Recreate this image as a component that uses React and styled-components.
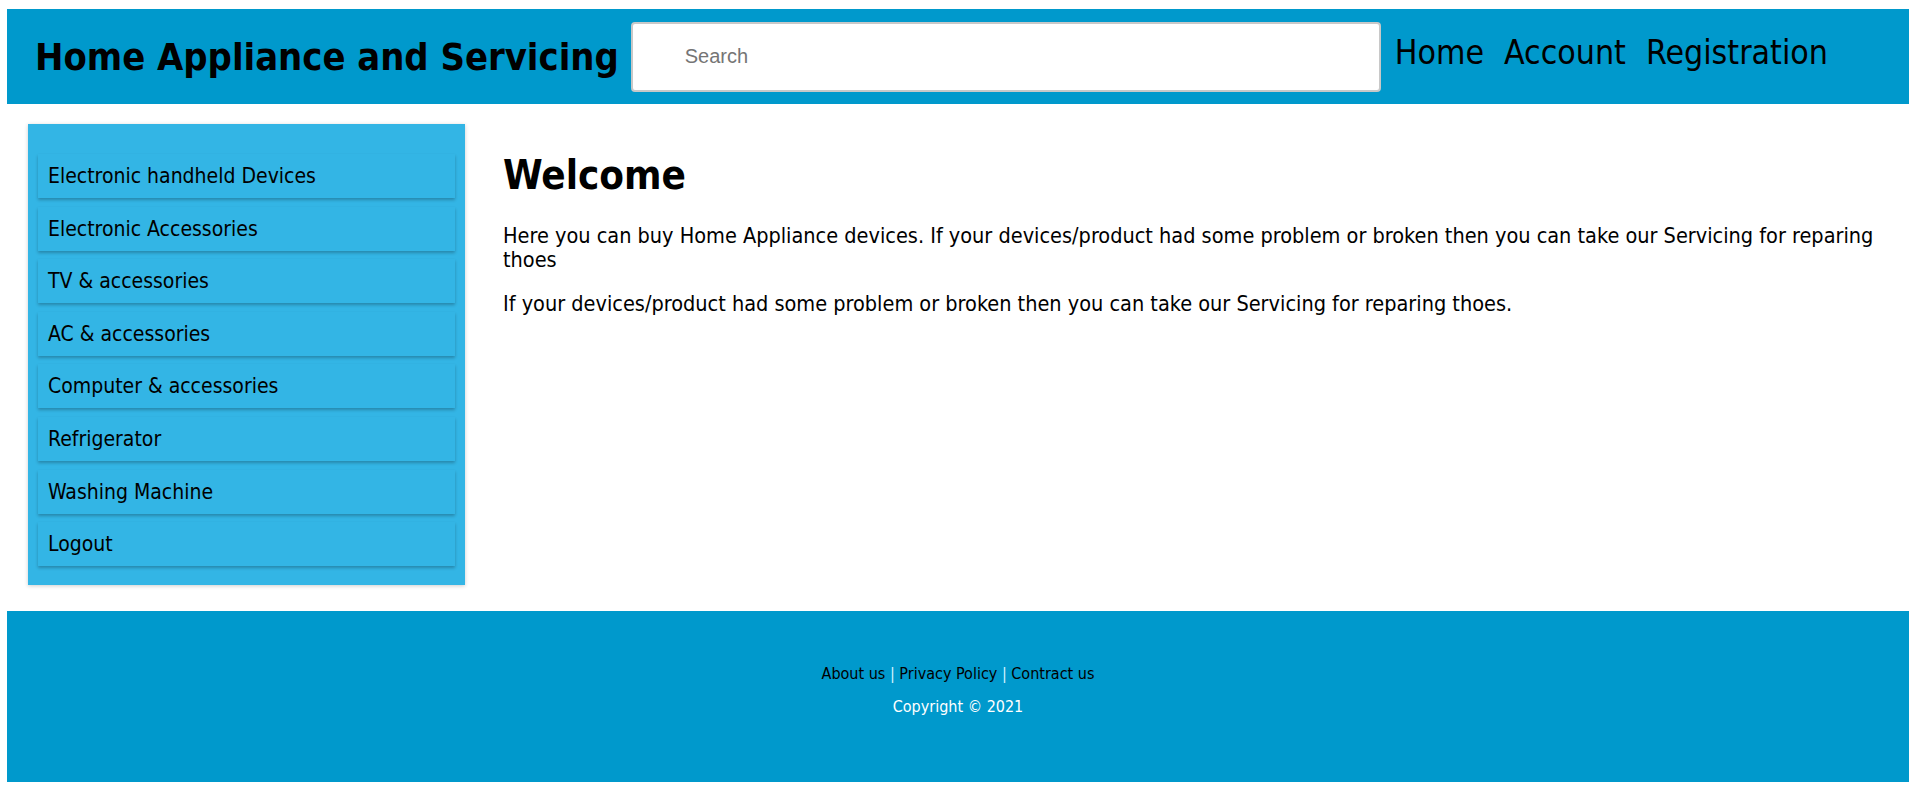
import styled, { createGlobalStyle } from "styled-components";

const GlobalStyle = createGlobalStyle`
  body {
    margin: 9px 7px 0 7px;
    background: #ffffff;
    font-family: "DejaVu Sans Condensed", "DejaVu Sans", sans-serif;
    font-stretch: condensed;
    color: #000000;
  }
`;

const Header = styled.header`
  display: flex;
  align-items: center;
  height: 95px;
  padding-left: 28px;
  background: #0099cc;
`;

const Title = styled.h1`
  margin: 0 12px 0 0;
  font-size: 37.75px;
  font-weight: 700;
  white-space: nowrap;
`;

const SearchBox = styled.input`
  box-sizing: border-box;
  width: 750px;
  height: 70px;
  padding: 0 52px;
  border: 2px solid #c8c8c8;
  border-radius: 4px;
  font-family: "Liberation Sans", Arial, sans-serif;
  font-size: 20px;
  &::placeholder {
    color: #757575;
  }
`;

const Nav = styled.nav`
  display: flex;
  gap: 20px;
  margin-left: 14px;
  margin-bottom: 8px;
`;

const NavLink = styled.a`
  font-size: 33.6px;
  color: #000000;
  text-decoration: none;
`;

const Body = styled.div`
  display: flex;
  align-items: flex-start;
  padding: 20px 0 0 21px;
`;

const Sidebar = styled.aside`
  flex: 0 0 437px;
  box-sizing: border-box;
  display: flex;
  flex-direction: column;
  gap: 8.6px;
  padding: 30px 10px 19px 10px;
  background: #33b5e5;
  box-shadow: 0 1px 4px rgba(0, 0, 0, 0.2);
`;

const MenuItem = styled.a`
  display: flex;
  align-items: center;
  height: 44px;
  padding-left: 10px;
  background: #33b5e5;
  box-shadow: 0 2px 3px rgba(0, 0, 0, 0.25);
  font-size: 21px;
  color: #000000;
  text-decoration: none;
`;

const Main = styled.main`
  flex: 1;
  padding: 0 25px 0 38px;
`;

const Heading = styled.h2`
  margin: 27.5px 0 26px 0;
  font-size: 40px;
  font-weight: 700;
`;

const Para = styled.p`
  margin: 0 0 19.5px 0;
  font-size: 21.5px;
  line-height: 24.5px;
`;

const Footer = styled.footer`
  display: flex;
  flex-direction: column;
  align-items: center;
  gap: 14px;
  height: 171px;
  box-sizing: border-box;
  padding-top: 53px;
  margin-top: 26px;
  background: #0099cc;
  font-size: 16px;
`;

const Links = styled.div`
  color: #d8f2ff;
`;

const FooterLink = styled.a`
  color: #000000;
  text-decoration: none;
`;

const Copyright = styled.div`
  color: #ffffff;
`;

const menu = [
  "Electronic handheld Devices",
  "Electronic Accessories",
  "TV & accessories",
  "AC & accessories",
  "Computer & accessories",
  "Refrigerator",
  "Washing Machine",
  "Logout",
];

const App = () => {
  return (
    <>
      <GlobalStyle />
      <Header>
        <Title>Home Appliance and Servicing</Title>
        <SearchBox placeholder="Search" />
        <Nav>
          <NavLink href="#">Home</NavLink>
          <NavLink href="#">Account</NavLink>
          <NavLink href="#">Registration</NavLink>
        </Nav>
      </Header>

      <Body>
        <Sidebar>
          {menu.map((m) => (
            <MenuItem key={m} href="#">{m}</MenuItem>
          ))}
        </Sidebar>
        <Main>
          <Heading>Welcome</Heading>
          <Para>
            Here you can buy Home Appliance devices. If your devices/product had some problem or broken then you can take our Servicing for reparing thoes
          </Para>
          <Para>
            If your devices/product had some problem or broken then you can take our Servicing for reparing thoes.
          </Para>
        </Main>
      </Body>

      <Footer>
        <Links>
          <FooterLink href="#">About us</FooterLink> | <FooterLink href="#">Privacy Policy</FooterLink> | <FooterLink href="#">Contract us</FooterLink>
        </Links>
        <Copyright>Copyright © 2021</Copyright>
      </Footer>
    </>
  );
};

export default App;
